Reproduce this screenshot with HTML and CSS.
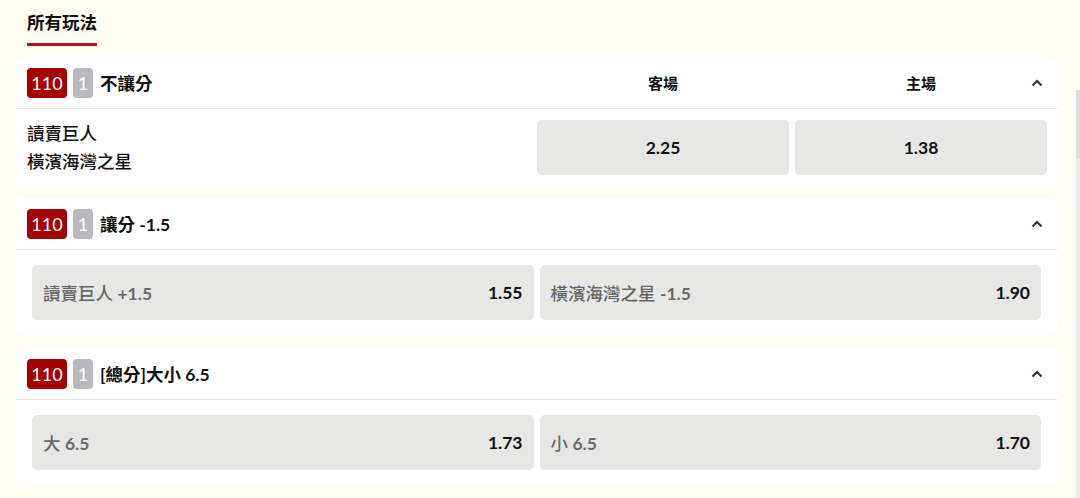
FILE: index.html
```html
<!DOCTYPE html>
<html lang="zh-Hant">
<head>
<meta charset="utf-8">
<title>所有玩法</title>
<link rel="stylesheet" href="styles.css">
</head>
<body>
<div class="page">
  <div class="tabs">
    <div class="tab active">所有玩法</div>
  </div>

  <section class="card">
    <div class="card-head grid3">
      <div class="head-title">
        <span class="badge red">110</span><span class="badge grey">1</span><span class="market">不讓分</span>
      </div>
      <div class="col-label">客場</div>
      <div class="col-label">主場</div>
      <svg class="chev" viewBox="0 0 12 8" width="12" height="8"><path d="M1.5 6.5 L6 2 L10.5 6.5" fill="none" stroke="#333" stroke-width="2.2"/></svg>
    </div>
    <div class="card-body grid3 tight">
      <div class="teams">
        <div>讀賣巨人</div>
        <div>橫濱海灣之星</div>
      </div>
      <button class="odd center"><b>2.25</b></button>
      <button class="odd center"><b>1.38</b></button>
    </div>
  </section>

  <section class="card">
    <div class="card-head">
      <div class="head-title">
        <span class="badge red">110</span><span class="badge grey">1</span><span class="market">讓分 -1.5</span>
      </div>
      <svg class="chev" viewBox="0 0 12 8" width="12" height="8"><path d="M1.5 6.5 L6 2 L10.5 6.5" fill="none" stroke="#333" stroke-width="2.2"/></svg>
    </div>
    <div class="card-body grid2">
      <button class="odd"><span class="lbl">讀賣巨人 <span class="num">+1.5</span></span><b>1.55</b></button>
      <button class="odd"><span class="lbl">橫濱海灣之星 <span class="num">-1.5</span></span><b>1.90</b></button>
    </div>
  </section>

  <section class="card">
    <div class="card-head">
      <div class="head-title">
        <span class="badge red">110</span><span class="badge grey">1</span><span class="market">[總分]大小 6.5</span>
      </div>
      <svg class="chev" viewBox="0 0 12 8" width="12" height="8"><path d="M1.5 6.5 L6 2 L10.5 6.5" fill="none" stroke="#333" stroke-width="2.2"/></svg>
    </div>
    <div class="card-body grid2">
      <button class="odd"><span class="lbl">大 <span class="num">6.5</span></span><b>1.73</b></button>
      <button class="odd"><span class="lbl">小 <span class="num">6.5</span></span><b>1.70</b></button>
    </div>
  </section>
</div>
<div class="scrollbar"><div class="thumb"></div></div>
</body>
</html>
```

FILE: styles.css
```css
* { box-sizing: border-box; }
html, body { margin: 0; padding: 0; }
body {
  background: #fffcf1;
  font-family: Lato, "Noto Sans CJK TC", "Noto Sans", sans-serif;
  color: #111;
  width: 1080px;
  height: 498px;
  overflow: hidden;
  position: relative;
}
.page {
  padding: 0 23px 0 16px;
}
.tabs {
  display: flex;
  padding: 0 11px;
  height: 57px;
}
.tab {
  font-size: 17.5px;
  font-weight: 700;
  line-height: 24px;
  padding-top: 11px;
  height: 46px;
  border-bottom: 3px solid #b5121b;
}
.card {
  background: #fff;
  border-radius: 5px;
  margin-bottom: 13px;
}
.card-head {
  position: relative;
  height: 52px;
  border-bottom: 1px solid #e7e7f0;
  display: flex;
  align-items: center;
  padding: 0 10px 0 11px;
}
.grid3 {
  display: grid;
  grid-template-columns: 1fr 252px 252px;
  column-gap: 6px;
}
.head-title {
  display: flex;
  align-items: center;
}
.badge {
  height: 30px;
  border-radius: 4px;
  color: #fff;
  font-size: 18px;
  line-height: 30px;
  text-align: center;
  margin-right: 6px;
}
.badge.red { background: #a50000; width: 40px; }
.badge.grey { background: #b8b9be; width: 20px; margin-right: 7px; }
.market {
  font-size: 17.5px;
  font-weight: 700;
}
.col-label {
  text-align: center;
  font-size: 15px;
  font-weight: 700;
}
.chev {
  position: absolute;
  right: 14px;
  top: 22px;
}
.card-body {
  padding: 15px 16px;
}
.card-body.tight {
  padding: 11px 10px 10px 11px;
}
.teams {
  height: 55px;
  display: flex;
  flex-direction: column;
  justify-content: center;
  font-size: 17.5px;
  font-weight: 500;
  line-height: 28px;
  padding-top: 1px;
}
.grid2 {
  display: grid;
  grid-template-columns: 1fr 1fr;
  column-gap: 6px;
}
.odd {
  height: 55px;
  border: 0;
  border-radius: 5px;
  background: #e7e8e6;
  font-family: inherit;
  font-size: 17.5px;
  color: #111;
  display: flex;
  align-items: center;
  justify-content: space-between;
  padding: 0 11px;
}
.odd.center { justify-content: center; }
.odd b { font-weight: 700; }
.odd .lbl { color: #666; font-weight: 500; }
.odd .num { font-weight: 700; color: #6a6a6a; }
.scrollbar {
  position: absolute;
  right: 0;
  top: 90px;
  bottom: 0;
  width: 4px;
  background: #ececec;
}
.thumb {
  height: 68px;
  background: #dcdcdc;
}
```
